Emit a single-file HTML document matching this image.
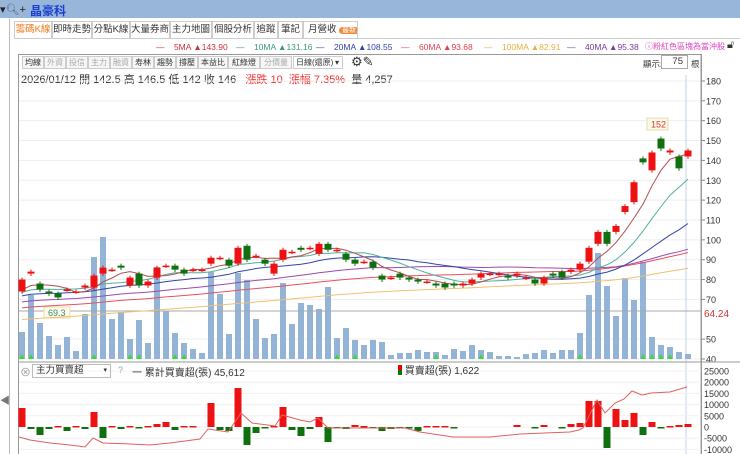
<!DOCTYPE html>
<html><head><meta charset="utf-8">
<style>
*{margin:0;padding:0;box-sizing:border-box}
body{width:740px;height:454px;overflow:hidden;background:#fff;font-family:"Liberation Sans","Noto Sans CJK TC",sans-serif;position:relative;font-size:11px;color:#333}
.abs{position:absolute;white-space:nowrap}
#title{left:0;top:0;width:740px;height:18px;background:#98b5da}
.tab{position:absolute;top:21px;height:17px;border:1px solid #ccc;border-bottom:none;background:#fff;font-size:9.5px;line-height:16px;text-align:center;color:#333;white-space:nowrap;overflow:hidden}
.tb{position:absolute;top:56px;height:13px;border:1px solid #ccc;background:#f6f6f6;font-size:8px;line-height:11px;text-align:center;color:#333;white-space:nowrap;overflow:hidden}
.tb.d{color:#aaa}
.lg{position:absolute;top:42px;font-size:8.5px;white-space:nowrap}
</style></head><body>
<div id="title" class="abs"></div>
<div class="abs" style="left:0;top:3px;font-size:11px;color:#222">▾<span style="color:#557">🔍︎</span>+</div>
<div class="abs" style="left:30px;top:2px;font-size:12px;color:#1a3fd0;font-weight:bold">晶豪科</div>
<div class="abs" style="left:9px;top:19px;width:1px;height:435px;background:#bbb"></div>
<div class="abs" style="left:0;top:392px;font-size:10px;color:#777">◀</div>

<div class="tab" style="left:14px;width:38px;color:#f07a1a">籌碼K線</div>
<div class="tab" style="left:52px;width:40px">即時走勢</div>
<div class="tab" style="left:92px;width:38px">分點K線</div>
<div class="tab" style="left:130px;width:40px">大量券商</div>
<div class="tab" style="left:170px;width:42px">主力地圖</div>
<div class="tab" style="left:212px;width:42px">個股分析</div>
<div class="tab" style="left:254px;width:24px">追蹤</div>
<div class="tab" style="left:278px;width:25px">筆記</div>
<div class="tab" style="left:303px;width:55px;text-align:left;padding-left:4px">月營收 <span style="background:#f08a3a;color:#fff;border-radius:6px;font-size:7px;padding:0 3px">最新</span></div>
<div class="abs" style="left:14px;top:38px;width:726px;height:1px;background:#ccc"></div>

<div class="lg" style="left:156px;color:#c33">—&nbsp;&nbsp;&nbsp;&nbsp;5MA ▲143.90</div>
<div class="lg" style="left:236px;color:#3a9a7a">—&nbsp;&nbsp;&nbsp;&nbsp;10MA ▲131.16</div>
<div class="lg" style="left:316px;color:#3344aa">—&nbsp;&nbsp;&nbsp;&nbsp;20MA ▲108.55</div>
<div class="lg" style="left:401px;color:#e04050">—&nbsp;&nbsp;&nbsp;&nbsp;60MA ▲93.68</div>
<div class="lg" style="left:484px;color:#e8b040">—&nbsp;&nbsp;&nbsp;&nbsp;100MA ▲82.91</div>
<div class="lg" style="left:567px;color:#7a3a9a">—&nbsp;&nbsp;&nbsp;&nbsp;40MA ▲95.38</div>
<div class="lg" style="left:645px;top:41px;font-size:8px;color:#e040c0">ⓘ粉紅色區塊為當沖股</div>
<div class="abs" style="left:727px;top:39px;font-size:11px">🔓︎</div>

<div class="abs" style="left:18px;top:54px;width:684px;height:400px;border:1px solid #999;border-bottom:none"></div>
<div class="tb" style="left:22px;width:22px">均線</div>
<div class="tb d" style="left:44px;width:22px">外資</div>
<div class="tb d" style="left:66px;width:22px">投信</div>
<div class="tb d" style="left:88px;width:22px">主力</div>
<div class="tb d" style="left:110px;width:22px">融資</div>
<div class="tb" style="left:132px;width:22px">寿林</div>
<div class="tb" style="left:154px;width:22px">趨勢</div>
<div class="tb" style="left:176px;width:22px">撐壓</div>
<div class="tb" style="left:198px;width:30px">本益比</div>
<div class="tb" style="left:228px;width:32px">紅綠燈</div>
<div class="tb d" style="left:260px;width:32px">分價量</div>
<div class="tb" style="left:293px;width:50px;background:#fff;text-align:left;padding-left:2px">日線(還原)<span style="position:absolute;right:3px">▾</span></div>
<div class="abs" style="left:351px;top:54px;font-size:13px">⚙✎</div>
<div class="abs" style="left:643px;top:58px;font-size:8.5px">顯示:</div>
<div class="abs" style="left:661px;top:55px;width:27px;height:14px;border:1px solid #aaa;font-size:9.5px;text-align:right;padding-right:4px;line-height:12px">75</div>
<div class="abs" style="left:691px;top:58px;font-size:8.5px">根</div>
<div class="abs" style="left:21px;top:71px;font-size:11px;color:#333">2026/01/12 開 142.5 高 146.5 低 142 收 146 &nbsp;&nbsp;<span style="color:#e33">漲跌 10 &nbsp;漲幅 7.35%</span> &nbsp;量 4,257</div>

<svg id="c" class="abs" style="left:0;top:0" width="740" height="454"></svg>

<div class="abs" style="left:20px;top:364px;font-size:11px;color:#999">⊗</div>
<div class="abs" style="left:32px;top:364px;width:79px;height:14px;border:1px solid #bbb;font-size:9.5px;line-height:12px;padding-left:3px;color:#333">主力買賣超<span style="position:absolute;right:3px;font-size:7px">▾</span></div>
<div class="abs" style="left:118px;top:365px;font-size:9px;color:#8ab">?</div>
<div class="abs" style="left:132px;top:364px;font-size:10px">一 累計買賣超(張) 45,612</div>
<div class="abs" style="left:398px;top:362px;font-size:10px"><span style="display:inline-block;width:4px;height:10px;background:linear-gradient(#e00 50%,#070 50%);vertical-align:-1px"></span> 買賣超(張) 1,622</div>

<script>
var s='';
function Y(p){return 359-(p-40)*1.986;}
function X(i){return 22+9*i;}
var C=[[74,80],[83,84],[78,75],[74,73],[73,71],[75,75],[74,74],[76,77],[76,82],[83,86],[85,85],[87,86],[77,81],[83,77],[77,79],[81,86],[87,87],[87,85],[85,83],[85,85],[85,85],[88,91],[91,91],[90,87],[88,96],[97,90],[92,92],[90,88],[83,88],[90,95],[94,94],[96,95],[96,96],[93,98],[98,95],[95,95],[93,90],[90,88],[89,89],[89,86],[82,80],[81,81],[83,81],[81,80],[80,79],[79,79],[78,77],[78,76],[78,77],[77,78],[78,80],[81,83],[83,83],[83,83],[82,81],[82,83],[81,81],[80,78],[78,81],[83,82],[84,81],[84,85],[85,88],[89,96],[98,104],[104,98],[104,107],[114,117],[119,129],[141,139],[135,144],[151,146],[144,145],[142,136],[142,145]];
var V=[332,295,323,336,345,337,351,314,257,237,319,312,339,320,343,267,311,333,343,349,353,272,294,334,273,280,319,338,334,283,324,303,305,309,287,338,328,340,345,340,342,355,353,353,350,352,352,355,349,351,345,350,352,356,356,357,354,353,350,353,350,350,333,295,253,286,316,278,300,262,337,345,347,352,354];
[180,170,160,150,140,130,120,110,100,90,80,70,50,40].forEach(function(p){var y=Y(p);s+='<line x1="19" x2="701" y1="'+y+'" y2="'+y+'" stroke="#eee"/><line x1="701" x2="705" y1="'+y+'" y2="'+y+'" stroke="#888"/><text x="706" y="'+(y+3.5)+'" font-size="9" fill="#333">'+p+'</text>';});
s+='<line x1="701" x2="701" y1="54" y2="454" stroke="#999"/>';
s+='<line x1="686" x2="686" y1="75" y2="454" stroke="#c5d3ea"/>';
V.forEach(function(t,i){s+='<rect x="'+(X(i)-3)+'" y="'+t+'" width="6" height="'+(359-t)+'" fill="#93b3d7"/>';});
[0,1,8,12,13,17,18,35,37,46,51,62,69,70,71,72].forEach(function(i){s+='<path d="M'+(X(i)-2.5)+' 359 L'+X(i)+' 354 L'+(X(i)+2.5)+' 359Z" fill="#33dd33"/>';});
s+='<line x1="19" x2="701" y1="311" y2="311" stroke="#aaa"/>';
s+='<rect x="44" y="307" width="26" height="11" fill="#fdfbe8" stroke="#e4dcb0"/><text x="48" y="316" font-size="9" fill="#3a8a7a">69.3</text>';
s+='<text x="704" y="317" font-size="10" fill="#c33">64.24</text>';
var pre=[];for(var k=0;k<100;k++)pre.push(45+29*k/99);
var all=pre.concat(C.map(function(c){return c[1]}));
function ma(n,col){var d='';for(var i=0;i<75;i++){var j=100+i,sm=0;for(var q=0;q<n;q++)sm+=all[j-q];d+=(i?'L':'M')+X(i)+' '+Y(sm/n).toFixed(1);}s+='<path d="'+d+'" fill="none" stroke="'+col+'" stroke-width="1"/>';}
ma(100,'#f0c070');ma(60,'#e85060');ma(40,'#9a4ab0');ma(20,'#3344aa');ma(10,'#50b0a0');ma(5,'#b05050');
C.forEach(function(c,i){var o=c[0],cl=c[1],up=cl>=o,col=up?'#ee1111':'#107010';var hi=Math.max(o,cl)+1,lo=Math.min(o,cl)-1.2;var x=X(i);s+='<line x1="'+x+'" x2="'+x+'" y1="'+Y(hi)+'" y2="'+Y(lo)+'" stroke="'+col+'"/>';var t=Y(Math.max(o,cl)),h=Math.max(1.5,Y(Math.min(o,cl))-t);s+='<rect x="'+(x-3.5)+'" y="'+t+'" width="7" height="'+h+'" fill="'+col+'"/>';});
s+='<rect x="647" y="118" width="21" height="12" fill="#fdfbe8" stroke="#e4dcb0"/><text x="651" y="127.5" font-size="9" fill="#d33">152</text>';
s+='<line x1="19" x2="740" y1="362" y2="362" stroke="#999"/>';
var z=427;[25000,20000,15000,10000,5000,0,-5000,-10000].forEach(function(v){var y=z-v/5000*11.2;s+='<line x1="19" x2="701" y1="'+y+'" y2="'+y+'" stroke="#f0f0f0"/><text x="704" y="'+(y+3.5)+'" font-size="9" fill="#333">'+v+'</text>';});
var B={0:19,1:-2,2:-8,3:-2,4:1,5:-4,6:1,7:-2,8:15,9:-11,10:1,11:-2,12:1,13:-1,14:1,15:3,16:5,17:-3,18:1,19:1,21:24,22:-3,23:-4,24:39,25:-18,26:-6,27:-1,28:1,29:20,30:-3,31:-9,32:-2,33:10,34:-15,35:-1,36:-2,37:2,38:1,39:-1,40:-4,41:-2,42:-1,43:-1,44:-4,45:1,46:1,47:1,48:-1,55:2,57:-1,58:2,60:-1,61:3,62:4,63:26,64:26,65:-21,66:18,67:7,68:14,69:-8,70:5,71:-1,72:1,73:2,74:3};
for(var i in B){var h=B[i],x=X(+i);if(h>0)s+='<rect x="'+(x-3.5)+'" y="'+(z-h)+'" width="7" height="'+Math.max(h,1.5)+'" fill="#ee1111"/>';else s+='<rect x="'+(x-3.5)+'" y="'+z+'" width="7" height="'+Math.max(-h,1.5)+'" fill="#107010"/>';}
var L=[[19,437],[30,440],[50,443],[70,445],[85,447],[93,438],[103,443],[130,444],[150,445],[170,443],[200,439],[208,429],[228,432],[241,413],[252,423],[275,426],[282,415],[300,420],[310,422],[318,418],[328,428],[370,428],[405,428],[420,432],[453,437],[490,437],[520,434],[570,432],[579,430],[583,428],[597,400],[605,413],[615,403],[624,399],[632,391],[642,395],[651,393],[670,392],[687,387]];
s+='<path d="M'+L.map(function(p){return p.join(' ')}).join('L')+'" fill="none" stroke="#e06060" stroke-width="1"/>';
document.getElementById('c').innerHTML=s;
</script>
</body></html>
